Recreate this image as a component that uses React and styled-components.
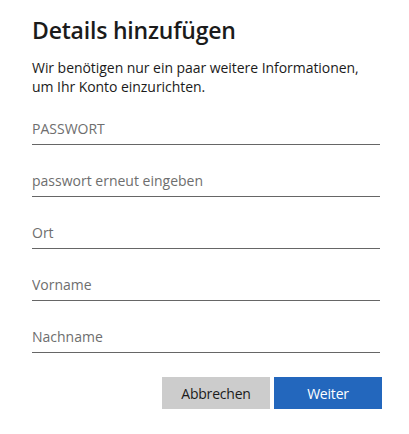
import React from 'react';
import styled, { createGlobalStyle } from 'styled-components';

const GlobalStyle = createGlobalStyle`
  html, body {
    margin: 0;
    padding: 0;
    background: #fff;
  }
  body {
    font-family: 'Segoe UI', 'Open Sans', 'Noto Sans', sans-serif;
    color: #1b1b1b;
  }
`;

const Dialog = styled.div`
  width: 350px;
  padding: 12px 0 0 32px;
`;

const Title = styled.h1`
  margin: 0;
  font-size: 23px;
  font-weight: 600;
  line-height: 36px;
  color: #1b1b1b;
  letter-spacing: -0.2px;
`;

const Intro = styled.p`
  margin: 10px 0 0;
  font-size: 14px;
  line-height: 19px;
  color: #1b1b1b;
  letter-spacing: -0.05px;
`;

const Fields = styled.div`
  display: flex;
  flex-direction: column;
  margin-top: -3px;
  width: 348px;
`;

const Input = styled.input`
  box-sizing: border-box;
  height: 52px;
  padding: 23px 0 3px;
  border: 0;
  border-bottom: 1px solid #666;
  outline: none;
  background: transparent;
  font-family: inherit;
  font-size: 14px;
  color: #1b1b1b;

  &::placeholder {
    color: #6e6e6e;
    opacity: 1;
  }
`;

const Actions = styled.div`
  display: flex;
  justify-content: flex-end;
  gap: 4px;
  margin-top: 24px;
  width: 350px;
`;

const Button = styled.button`
  width: 108px;
  height: 32px;
  border: 0;
  padding: 0;
  font-family: inherit;
  font-size: 14px;
  letter-spacing: -0.2px;
  cursor: pointer;
  background: ${(p) => (p.$primary ? '#2367bd' : '#cccccc')};
  color: ${(p) => (p.$primary ? '#fff' : '#1b1b1b')};
`;

export default function App() {
  return (
    <>
      <GlobalStyle />
      <Dialog>
        <Title>Details hinzufügen</Title>
        <Intro>
          Wir benötigen nur ein paar weitere Informationen,
          <br />
          um Ihr Konto einzurichten.
        </Intro>
        <Fields>
          <Input type="password" placeholder="PASSWORT" />
          <Input type="password" placeholder="passwort erneut eingeben" />
          <Input type="text" placeholder="Ort" />
          <Input type="text" placeholder="Vorname" />
          <Input type="text" placeholder="Nachname" />
        </Fields>
        <Actions>
          <Button type="button">Abbrechen</Button>
          <Button type="button" $primary>
            Weiter
          </Button>
        </Actions>
      </Dialog>
    </>
  );
}
